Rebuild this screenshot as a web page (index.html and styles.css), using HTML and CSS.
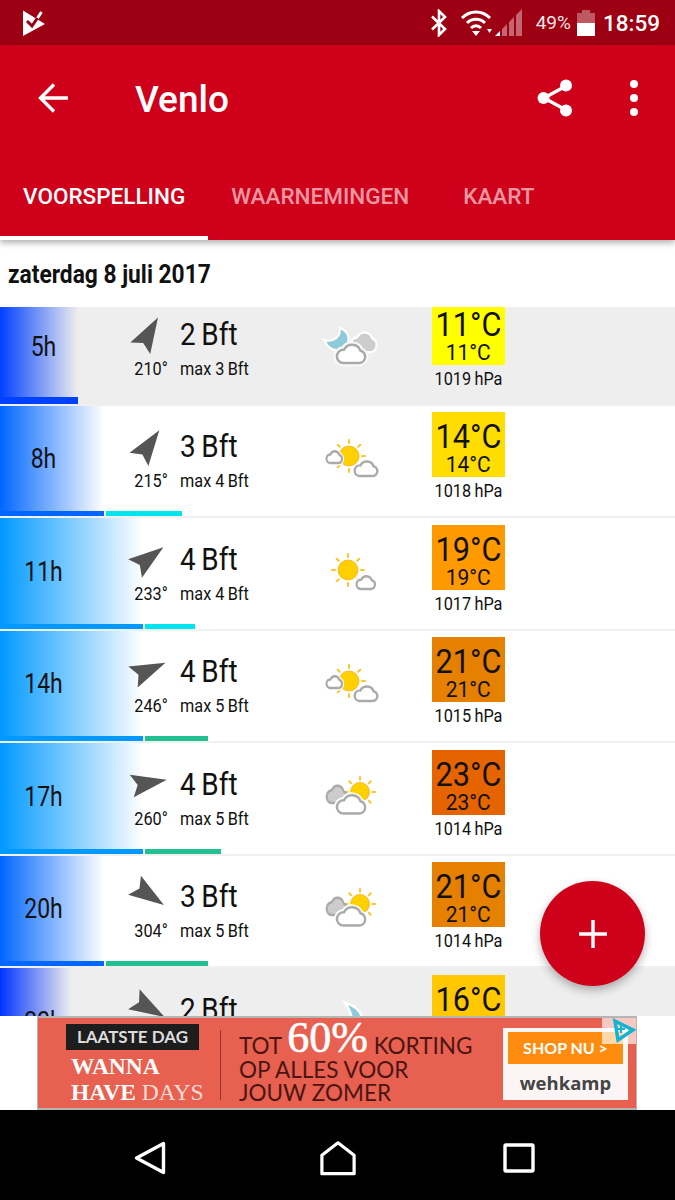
FILE: index.html
```html
<!DOCTYPE html>
<html lang="en">
<head>
  <meta charset="UTF-8">
  <title>Venlo</title>
  <link rel="stylesheet" href="styles.css">
</head>
<body>

  <svg class="sprite" xmlns="http://www.w3.org/2000/svg">
    <defs>
      <polygon id="arrow" points="0,-18 11.5,17.5 0,11.5 -11.5,17.5"/>
      <path id="cloud" d="M7 20H23A6.2 6.2 0 0 0 24.5 7.8A9 9 0 0 0 8 6.8A6.6 6.6 0 0 0 7 20Z"/>
      <g id="rays" stroke="#fdc42d" stroke-width="2" stroke-linecap="round">
        <path d="M0-13V-16M9.2-9.2L11.3-11.3M13 0H16M9.2 9.2L11.3 11.3M0 13V16M-9.2 9.2L-11.3 11.3M-13 0H-16M-9.2-9.2L-11.3-11.3"/>
      </g>
      <symbol id="moon-cloud" viewBox="0 0 60 44">
        <path d="M19 3C25 5 29 11 27 18C25 25 14 28 8 22C6 20 5 18 3 15C9 17 15 15 18 10C19 8 19 5 19 3Z" fill="#8fcadb" stroke="#fff" stroke-width="2"/>
        <use href="#cloud" transform="translate(30 7) scale(.84 .95)" fill="#ccc" stroke="#fff" stroke-width="5"/>
        <use href="#cloud" transform="translate(30 7) scale(.84 .95)" fill="#ccc"/>
        <use href="#cloud" transform="translate(15 18)" fill="#fff" stroke="#f8f8f8" stroke-width="7"/>
        <use href="#cloud" transform="translate(15 18)" fill="#fff" stroke="#aaa" stroke-width="2.5"/>
      </symbol>
      <symbol id="moon-high" viewBox="0 0 60 44">
        <path d="M24 3C33 5 41 11 41 20C41 26 36 30 30 30C33 24 31 12 24 3Z" fill="#8fcadb" stroke="#fff" stroke-width="2.500"/>
      </symbol>
      <symbol id="sun-clouds" viewBox="0 0 60 44">
        <use href="#rays" transform="translate(28 19)"/>
        <circle cx="28" cy="19" r="10" fill="#fed000" stroke="#fdb92d" stroke-width="1"/>
        <use href="#cloud" transform="translate(5 13) scale(.55 .65)" fill="#fff" stroke="#fff" stroke-width="8"/>
        <use href="#cloud" transform="translate(5 13) scale(.55 .65)" fill="#fff" stroke="#aaa" stroke-width="3.8"/>
        <use href="#cloud" transform="translate(33 23) scale(.8)" fill="#fff" stroke="#fff" stroke-width="6"/>
        <use href="#cloud" transform="translate(33 23) scale(.8)" fill="#fff" stroke="#aaa" stroke-width="3"/>
      </symbol>
      <symbol id="sun-cloud" viewBox="0 0 60 44">
        <use href="#rays" transform="translate(27 20)"/>
        <circle cx="27" cy="20" r="10" fill="#fed000" stroke="#fdb92d" stroke-width="1"/>
        <use href="#cloud" transform="translate(35 25) scale(.65 .7)" fill="#fff" stroke="#fff" stroke-width="6"/>
        <use href="#cloud" transform="translate(35 25) scale(.65 .7)" fill="#fff" stroke="#aaa" stroke-width="3.4"/>
      </symbol>
      <symbol id="cloud-sun" viewBox="0 0 60 44">
        <use href="#rays" transform="translate(39 17) scale(.95)"/>
        <circle cx="39" cy="17" r="9.5" fill="#fed000" stroke="#fdb92d" stroke-width="1"/>
        <use href="#cloud" transform="translate(5 9) scale(.72 .95)" fill="#ccc" stroke="#aaa" stroke-width="2.8"/>
        <use href="#cloud" transform="translate(15 18.5)" fill="#fff" stroke="#fff" stroke-width="6"/>
        <use href="#cloud" transform="translate(15 18.5)" fill="#fff" stroke="#aaa" stroke-width="2.5"/>
      </symbol>
    </defs>
  </svg>

  <div class="status-bar">
    <svg class="status-logo" viewBox="0 0 24 26" width="24" height="26">
      <path d="M1 .5L23 14 1 26Z" fill="#fff"/>
      <path d="M5 11L10 16 15.500 8" fill="none" stroke="#9c0012" stroke-width="3"/>
      <path d="M15.500 8L19.500 2" fill="none" stroke="#fff" stroke-width="3"/>
    </svg>
    <div class="status-right">
      <svg class="status-bt" viewBox="0 0 18 28" width="18" height="28">
        <path d="M2 7.500L15 20 9 26V2L15 8 2 20.500" fill="none" stroke="#fff" stroke-width="2.600"/>
      </svg>
      <svg class="status-wifi" viewBox="0 0 32 28" width="32" height="28">
        <path d="M2 9C10 1 22 1 30 9M7 14C12 9 20 9 25 14M11 19C14 16 18 16 21 19" fill="none" stroke="#fff" stroke-width="3"/>
        <path d="M12 22H20L16 27Z" fill="#fff"/>
        <path d="M27 20H32L29.500 24Z" fill="#fff"/>
      </svg>
      <svg class="status-signal" viewBox="0 0 28 28" width="28" height="28">
        <path d="M0 27L5 22V27Z" fill="#fff"/>
        <path d="M7 27V20L12 15V27ZM14 27V13L19 8V27ZM21 27V6L27 0V27Z" fill="#fff" fill-opacity=".4"/>
      </svg>
      <span class="status-battery-text">49%</span>
      <div class="battery"><div class="battery-fill"></div></div>
      <span class="status-time">18:59</span>
    </div>
  </div>

  <header class="app-bar">
    <div class="toolbar">
      <svg class="back-icon" viewBox="0 0 30 30" width="30" height="30">
        <path d="M30 15H3M16 1.500L2.500 15 16 28.500" fill="none" stroke="#fff" stroke-width="3.400"/>
      </svg>
      <h1 class="title">Venlo</h1>
      <svg class="share-icon" viewBox="0 0 36 38" width="36" height="38">
        <path d="M29 7L7 19 29 31" fill="none" stroke="#fff" stroke-width="3.400"/>
        <circle cx="29" cy="6.500" r="6" fill="#fff"/>
        <circle cx="6.500" cy="19" r="6" fill="#fff"/>
        <circle cx="29" cy="31.500" r="6" fill="#fff"/>
      </svg>
      <div class="more-icon"><i></i><i></i><i></i></div>
    </div>
    <nav class="tabs">
      <span class="tab active">VOORSPELLING</span>
      <span class="tab">WAARNEMINGEN</span>
      <span class="tab">KAART</span>
    </nav>
  </header>

  <main class="content">
    <h2 class="day"><span>zaterdag 8 juli 2017</span></h2>

    <div class="forecast">

      <div class="row night" style="--rain:78px;--rain-color:#0040ff">
        <div class="row-main">
          <div class="hour">5h</div>
          <div class="dir">
            <svg viewBox="-25 -25 50 50" width="50" height="50"><use href="#arrow" transform="rotate(30)"/></svg>
            <span>210°</span>
          </div>
          <div class="speed"><div class="bft">2&thinsp;Bft</div><div class="gust">max 3&thinsp;Bft</div></div>
          <div class="sky"><svg width="60" height="44"><use href="#moon-cloud"/></svg></div>
          <div class="temp">
            <div class="temp-box" style="background:#ffff00"><b>11°C</b><small>11°C</small></div>
            <div class="pressure">1019&thinsp;hPa</div>
          </div>
        </div>
        <div class="bars"><i class="rain-bar"></i></div>
      </div>

      <div class="row" style="--rain:104px;--rain-color:#0066ff">
        <div class="row-main">
          <div class="hour">8h</div>
          <div class="dir">
            <svg viewBox="-25 -25 50 50" width="50" height="50"><use href="#arrow" transform="rotate(35)"/></svg>
            <span>215°</span>
          </div>
          <div class="speed"><div class="bft">3&thinsp;Bft</div><div class="gust">max 4&thinsp;Bft</div></div>
          <div class="sky"><svg width="60" height="44"><use href="#sun-clouds"/></svg></div>
          <div class="temp">
            <div class="temp-box" style="background:#ffdd00"><b>14°C</b><small>14°C</small></div>
            <div class="pressure">1018&thinsp;hPa</div>
          </div>
        </div>
        <div class="bars"><i class="rain-bar"></i><i class="gust-bar" style="width:76px;background:#00e5ee"></i></div>
      </div>

      <div class="row" style="--rain:143px;--rain-color:#0099ff">
        <div class="row-main">
          <div class="hour">11h</div>
          <div class="dir">
            <svg viewBox="-25 -25 50 50" width="50" height="50"><use href="#arrow" transform="rotate(53)"/></svg>
            <span>233°</span>
          </div>
          <div class="speed"><div class="bft">4&thinsp;Bft</div><div class="gust">max 4&thinsp;Bft</div></div>
          <div class="sky"><svg width="60" height="44"><use href="#sun-cloud"/></svg></div>
          <div class="temp">
            <div class="temp-box" style="background:#ff9900"><b>19°C</b><small>19°C</small></div>
            <div class="pressure">1017&thinsp;hPa</div>
          </div>
        </div>
        <div class="bars"><i class="rain-bar"></i><i class="gust-bar" style="width:50px;background:#00e5ee"></i></div>
      </div>

      <div class="row" style="--rain:143px;--rain-color:#0099ff">
        <div class="row-main">
          <div class="hour">14h</div>
          <div class="dir">
            <svg viewBox="-25 -25 50 50" width="50" height="50"><use href="#arrow" transform="rotate(66)"/></svg>
            <span>246°</span>
          </div>
          <div class="speed"><div class="bft">4&thinsp;Bft</div><div class="gust">max 5&thinsp;Bft</div></div>
          <div class="sky"><svg width="60" height="44"><use href="#sun-clouds"/></svg></div>
          <div class="temp">
            <div class="temp-box" style="background:#e68000"><b>21°C</b><small>21°C</small></div>
            <div class="pressure">1015&thinsp;hPa</div>
          </div>
        </div>
        <div class="bars"><i class="rain-bar"></i><i class="gust-bar" style="width:63px;background:#22c191"></i></div>
      </div>

      <div class="row" style="--rain:143px;--rain-color:#0099ff">
        <div class="row-main">
          <div class="hour">17h</div>
          <div class="dir">
            <svg viewBox="-25 -25 50 50" width="50" height="50"><use href="#arrow" transform="rotate(80)"/></svg>
            <span>260°</span>
          </div>
          <div class="speed"><div class="bft">4&thinsp;Bft</div><div class="gust">max 5&thinsp;Bft</div></div>
          <div class="sky"><svg width="60" height="44"><use href="#cloud-sun"/></svg></div>
          <div class="temp">
            <div class="temp-box" style="background:#e66400"><b>23°C</b><small>23°C</small></div>
            <div class="pressure">1014&thinsp;hPa</div>
          </div>
        </div>
        <div class="bars"><i class="rain-bar"></i><i class="gust-bar" style="width:76px;background:#22c191"></i></div>
      </div>

      <div class="row" style="--rain:104px;--rain-color:#0066ff">
        <div class="row-main">
          <div class="hour">20h</div>
          <div class="dir">
            <svg viewBox="-25 -25 50 50" width="50" height="50"><use href="#arrow" transform="rotate(124)"/></svg>
            <span>304°</span>
          </div>
          <div class="speed"><div class="bft">3&thinsp;Bft</div><div class="gust">max 5&thinsp;Bft</div></div>
          <div class="sky"><svg width="60" height="44"><use href="#cloud-sun"/></svg></div>
          <div class="temp">
            <div class="temp-box" style="background:#e68000"><b>21°C</b><small>21°C</small></div>
            <div class="pressure">1014&thinsp;hPa</div>
          </div>
        </div>
        <div class="bars"><i class="rain-bar"></i><i class="gust-bar" style="width:102px;background:#22c191"></i></div>
      </div>

      <div class="row night" style="--rain:71px;--rain-color:#0033ff">
        <div class="row-main">
          <div class="hour">23h</div>
          <div class="dir">
            <svg viewBox="-25 -25 50 50" width="50" height="50"><use href="#arrow" transform="rotate(120)"/></svg>
            <span>300°</span>
          </div>
          <div class="speed"><div class="bft">2&thinsp;Bft</div><div class="gust">max 4&thinsp;Bft</div></div>
          <div class="sky"><svg width="60" height="44"><use href="#moon-high"/></svg></div>
          <div class="temp">
            <div class="temp-box" style="background:#ffc800"><b>16°C</b><small>16°C</small></div>
            <div class="pressure">1014&thinsp;hPa</div>
          </div>
        </div>
        <div class="bars"><i class="rain-bar"></i></div>
      </div>

    </div>

    <button class="fab" type="button">
      <svg viewBox="0 0 28 28" width="28" height="28"><path d="M14 0V28M0 14H28" stroke="#fff" stroke-width="3.400"/></svg>
    </button>
  </main>

  <aside class="ad-slot">
    <div class="ad">
      <div class="ad-left">
        <div class="ad-tag">LAATSTE DAG</div>
        <div class="ad-wanna">WANNA<br>HAVE <span>DAYS</span></div>
      </div>
      <div class="ad-copy">
        <div class="ad-line ad-line-top">TOT <b>60%</b> KORTING</div>
        <div class="ad-line">OP ALLES VOOR</div>
        <div class="ad-line">JOUW ZOMER</div>
      </div>
      <div class="ad-cta">
        <div class="ad-shop">SHOP NU &gt;</div>
        <div class="ad-brand">wehkamp</div>
      </div>
      <div class="ad-choice">
        <svg viewBox="0 0 24 26" width="24" height="26">
          <path d="M3 3L21 12 6 22Z" fill="none" stroke="#12b5cf" stroke-width="3.500"/>
          <path d="M9 8V15M6 11H13" stroke="#12b5cf" stroke-width="2"/>
        </svg>
      </div>
    </div>
  </aside>

  <footer class="nav-bar">
    <svg viewBox="0 0 32 34" width="32" height="34"><path d="M29.500 2.500V31.500L2.500 17Z" fill="none" stroke="#fff" stroke-width="3.400" stroke-linejoin="round"/></svg>
    <svg class="nav-home" viewBox="0 0 38 36" width="36" height="36"><path d="M2 34.500V15L19 2 36 15V34.500Z" fill="none" stroke="#fff" stroke-width="3.400" stroke-linejoin="round"/></svg>
    <svg viewBox="0 0 32 30" width="32" height="30"><rect x="2" y="2" width="28" height="26" rx="1" fill="none" stroke="#fff" stroke-width="3.400"/></svg>
  </footer>

</body>
</html>
```

FILE: styles.css
```css
* {
  box-sizing: border-box;
}
body {
  margin: 0;
  width: 675px;
  height: 1200px;
  display: flex;
  flex-direction: column;
  overflow: hidden;
  font-family: Roboto, sans-serif;
  background-color: #fff;
  color: #111;
}
.sprite {
  position: absolute;
  width: 0;
  height: 0;
}

.status-bar {
  height: 45px;
  flex: none;
  display: flex;
  align-items: center;
  justify-content: space-between;
  padding: 0 15px 0 22px;
  background-color: #9c0012;
  color: #fff;
}
.status-right {
  display: flex;
  align-items: center;
}
.status-bt {
  margin-right: 12px;
}
.status-wifi {
  margin-right: 3px;
}
.status-signal {
  margin-right: 13px;
}
.status-battery-text {
  font-size: 19px;
  margin-right: 6px;
  opacity: .9;
}
.battery {
  width: 18px;
  height: 23px;
  margin: 3px 8px 0 0;
  position: relative;
  display: flex;
  align-items: flex-end;
  background-color: rgba(255, 255, 255, .35);
}
.battery::before {
  content: "";
  position: absolute;
  top: -3px;
  left: 5px;
  width: 8px;
  height: 3px;
  background-color: rgba(255, 255, 255, .35);
}
.battery-fill {
  width: 100%;
  height: 54%;
  background-color: #fff;
}
.status-time {
  font-size: 22.5px;
  font-weight: 500;
}

.app-bar {
  height: 195px;
  flex: none;
  position: relative;
  z-index: 3;
  display: flex;
  flex-direction: column;
  background-color: #cf0019;
  color: #fff;
  box-shadow: 0 3px 6px rgba(0, 0, 0, .3);
}
.toolbar {
  height: 106px;
  display: flex;
  align-items: center;
  padding: 0 37px 0 38px;
}
.title {
  flex: 1;
  margin: 2px 0 0 67px;
  font-size: 37px;
  font-weight: 500;
}
.share-icon {
  margin-right: 57px;
}
.more-icon {
  display: flex;
  flex-direction: column;
  gap: 6px;
}
.more-icon i {
  display: block;
  width: 8px;
  height: 8px;
  border-radius: 50%;
  background-color: #fff;
}
.tabs {
  flex: 1;
  display: flex;
}
.tab {
  display: flex;
  align-items: center;
  padding: 0 23px;
  font-size: 22.5px;
  font-weight: 500;
  color: rgba(255, 255, 255, .6);
}
.tab.active {
  color: #fff;
  padding-top: 4px;
  border-bottom: 4px solid #fff;
}
.tab:last-child {
  margin-left: 8px;
}

.content {
  flex: 1;
  min-height: 0;
  position: relative;
  overflow: hidden;
}
.day {
  position: relative;
  z-index: 2;
  height: 67px;
  margin: 0;
  padding: 18px 0 0 8px;
  font-size: 25px;
  line-height: 34px;
  font-weight: 700;
  background-color: #fff;
}
.day span {
  display: inline-block;
  transform: scaleX(.91);
  transform-origin: left;
}
.forecast {
  margin-top: -14px;
}
.row {
  height: 112.5px;
  display: flex;
  flex-direction: column;
  border-bottom: 2px solid #f0f0f0;
  background-image: linear-gradient(to right, var(--rain-color), rgba(255, 255, 255, 0));
  background-size: var(--rain) 100%;
  background-repeat: no-repeat;
}
.row.night {
  background-color: #eee;
}
.row-main {
  flex: 1;
  min-height: 0;
  display: grid;
  grid-template-columns: 87px 93px 118px 106px 73px;
  padding-top: 6.5px;
}
.hour {
  font-size: 27px;
  text-align: center;
  padding-top: 31px;
  transform: scaleX(.85);
}
.dir {
  display: flex;
  flex-direction: column;
  align-items: center;
  padding: 8px 0 0 36px;
  font-size: 17.5px;
  line-height: 20px;
}
.dir svg {
  margin-left: -5px;
  margin-bottom: 1px;
  fill: #555;
}
.dir span {
  transform: scaleX(.93);
}
.speed {
  padding-top: 17px;
}
.bft {
  font-size: 31px;
  line-height: 36px;
  transform: scaleX(.9);
  transform-origin: left;
}
.gust {
  font-size: 17.5px;
  line-height: 20px;
  margin-top: 6px;
  transform: scaleX(.93);
  transform-origin: left;
}
.sky {
  display: flex;
  justify-content: center;
  padding-top: 25px;
}
.temp {
  margin-left: 28px;
  width: 73px;
  text-align: center;
}
.temp-box {
  height: 65px;
  display: flex;
  flex-direction: column;
  align-items: center;
  padding-top: 6px;
}
.temp-box b {
  font-weight: 400;
  font-size: 33px;
  line-height: 38px;
  transform: scaleX(.93);
}
.temp-box small {
  font-size: 22.5px;
  line-height: 16px;
  transform: scaleX(.93);
}
.pressure {
  font-size: 17.5px;
  line-height: 28px;
  white-space: nowrap;
  transform: scaleX(.93);
}
.bars {
  height: 5px;
  flex: none;
  display: flex;
  gap: 2px;
}
.night .bars {
  height: 7px;
}
.bars i {
  display: block;
  height: 100%;
}
.rain-bar {
  width: var(--rain);
  background-color: var(--rain-color);
}

.fab {
  position: absolute;
  right: 30px;
  top: 641px;
  width: 105px;
  height: 105px;
  padding: 0;
  border: none;
  border-radius: 50%;
  display: flex;
  align-items: center;
  justify-content: center;
  background-color: #cf0019;
  box-shadow: 0 4px 10px rgba(0, 0, 0, .3);
}

.ad-slot {
  height: 94px;
  flex: none;
  position: relative;
  z-index: 2;
  display: flex;
  justify-content: flex-end;
  padding-right: 38px;
  background-color: #fff;
}
.ad {
  width: 600px;
  position: relative;
  display: flex;
  background-color: #e8604f;
  border: 2px solid #b5b5b5;
  border-width: 2px 1px;
  font-family: Lato, sans-serif;
}
.ad-left {
  width: 182px;
  padding: 6px 0 0 28px;
}
.ad-tag {
  width: 133px;
  height: 26px;
  line-height: 26px;
  text-align: center;
  font-size: 17px;
  font-weight: 700;
  background-color: #1d1d1d;
  color: #ddd;
}
.ad-wanna {
  margin: 3px 0 0 5px;
  font-family: "Liberation Serif", serif;
  font-weight: 700;
  font-size: 23.5px;
  line-height: 26px;
  color: #fff;
  white-space: nowrap;
}
.ad-wanna span {
  font-weight: 400;
  color: #fbdcd8;
}
.ad-copy {
  width: 283px;
  margin-top: 12px;
  margin-bottom: 8px;
  padding-left: 18px;
  border-left: 1px solid #8c3a30;
  color: #4a1512;
}
.ad-line {
  font-size: 22.5px;
  line-height: 23px;
  white-space: nowrap;
}
.ad-line-top {
  margin: -7px 0 -3px;
  line-height: 30px;
}
.ad-line-top b {
  font-family: "Liberation Serif", serif;
  font-weight: 400;
  font-size: 44px;
  line-height: 30px;
  vertical-align: 2px;
  color: #fff;
  -webkit-text-stroke: .6px #fff;
}
.ad-cta {
  width: 125px;
  margin: 10px 0 8px 0;
  padding: 4px 5px 0;
  background-color: #fbf6f5;
}
.ad-shop {
  height: 32px;
  line-height: 32px;
  text-align: center;
  font-size: 16px;
  font-weight: 700;
  color: #fff;
  background-color: #ff8c0f;
}
.ad-brand {
  margin-top: 6px;
  text-align: center;
  font-family: "Open Sans", sans-serif;
  font-size: 18.5px;
  font-weight: 700;
  color: #444;
}
.ad-choice {
  position: absolute;
  top: 0;
  right: 0;
  width: 34px;
  height: 26px;
  display: flex;
  justify-content: flex-end;
  background-color: rgba(255, 255, 255, .65);
}

.nav-bar {
  height: 90px;
  flex: none;
  display: flex;
  align-items: center;
  padding: 6px 0 0 134px;
  background-color: #000;
}
.nav-home {
  margin: 0 147px 0 154px;
}
```
